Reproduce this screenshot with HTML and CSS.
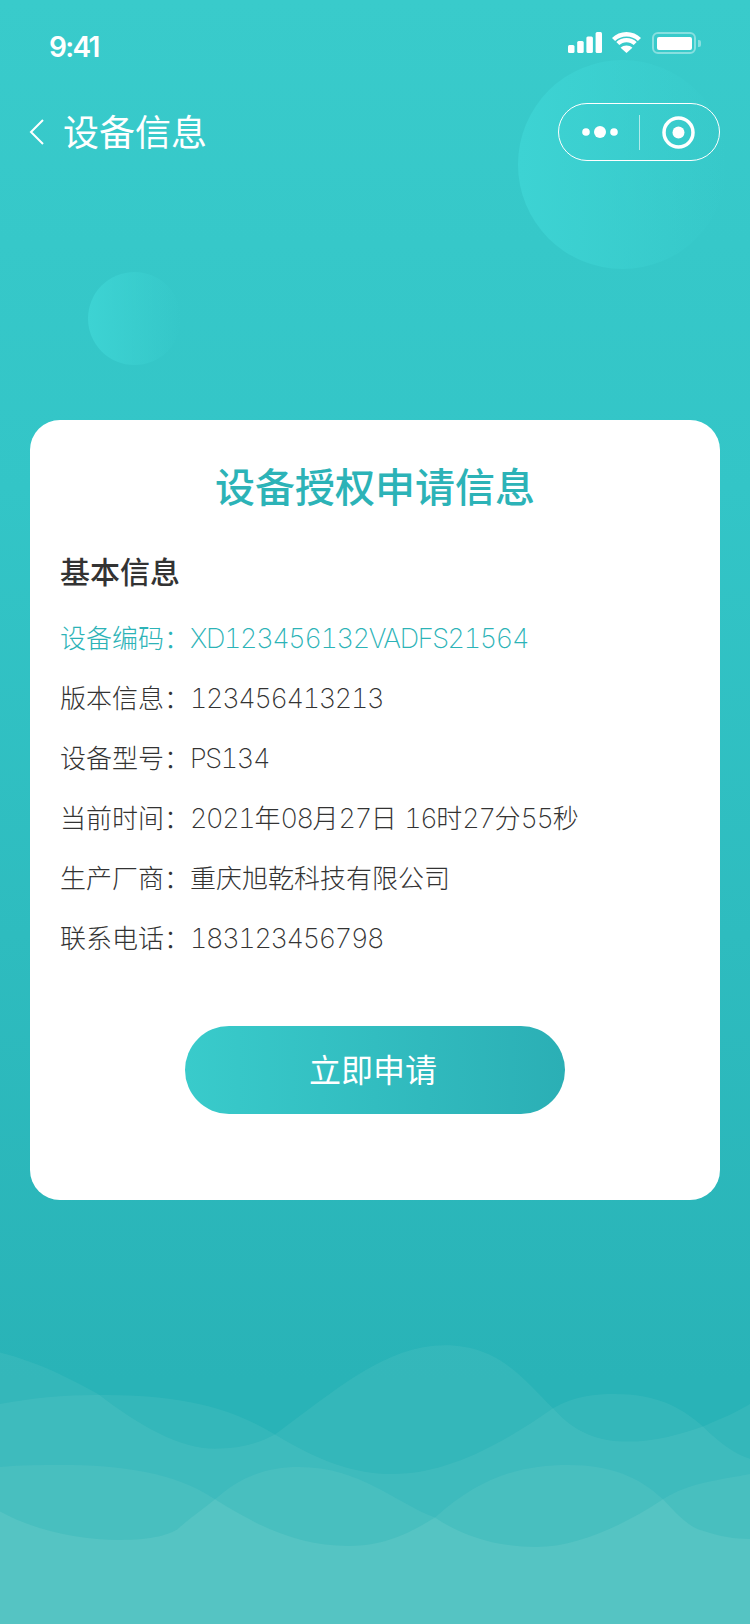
FILE: index.html
```html
<!DOCTYPE html>
<html>
<head>
  <meta charset="UTF-8">
  <title>设备信息</title>
  <link rel="stylesheet" href="styles.css">
</head>
<body>
  <div class="page">
    <div class="bubble bubble-large"></div>
    <div class="bubble bubble-small"></div>

    <svg class="waves" viewBox="0 0 750 300" preserveAspectRatio="none">
      <path class="wave" d="M0 32 C40 42 70 58 98 73 C140 105 180 127 215 127 C240 127 258 122 275 113 C335 70 385 25 445 25 C500 25 525 60 553 87 C575 112 600 120 627 120 C655 120 680 113 703 105 C720 98 735 92 750 83 V300 H0 Z"/>
      <path class="wave" d="M0 83 C30 77 65 74 96 74 C165 74 220 80 275 113 C320 140 355 152 392 152 C450 152 505 120 553 87 C575 75 595 73 615 73 C655 73 680 85 703 105 C720 122 735 132 750 137 V300 H0 Z"/>
      <path class="wave" d="M0 145 C20 143 40 143 62 143 C120 143 175 150 215 177 C240 155 265 145 299 145 C360 145 395 180 435 195 C480 155 520 143 569 143 C610 143 640 155 663 177 C690 160 720 158 750 152 V300 H0 Z"/>
      <path class="wave" d="M0 189 C35 208 80 217 120 217 C150 217 165 213 177 207 C190 195 203 187 215 177 C260 205 300 223 349 223 C385 223 410 210 435 195 C465 215 500 224 536 224 C575 224 620 205 663 177 C680 195 690 205 703 208 C720 214 735 216 750 216 V300 H0 Z"/>
    </svg>

    <div class="status-bar">
      <span class="clock">9:41</span>
      <div class="status-icons">
        <svg class="icon-signal" viewBox="0 0 34 21">
          <rect x="0" y="13" width="6.5" height="8" rx="1.5"/>
          <rect x="9.2" y="9" width="6.5" height="12" rx="1.5"/>
          <rect x="18.4" y="4.5" width="6.5" height="16.5" rx="1.5"/>
          <rect x="27.6" y="0" width="6.4" height="21" rx="1.5"/>
        </svg>
        <svg class="icon-wifi" viewBox="0 0 30 21">
          <path d="M15 4.600 C19.400 4.600 23.400 6.300 26.400 9.100 L29.500 6 C25.700 2.300 20.600 0 15 0 C9.400 0 4.300 2.300 .5 6 L3.600 9.100 C6.600 6.300 10.600 4.600 15 4.600 Z"/>
          <path d="M15 10.300 C17.800 10.300 20.300 11.400 22.200 13.100 L25.200 10 C22.500 7.500 19 6 15 6 C11 6 7.500 7.500 4.800 10 L7.800 13.100 C9.700 11.400 12.200 10.300 15 10.300 Z"/>
          <path d="M15 21 L20.900 15.700 C19.300 14.300 17.300 13.400 15 13.400 C12.700 13.400 10.700 14.300 9.100 15.700 Z"/>
        </svg>
        <div class="battery">
          <div class="battery-body"><div class="battery-level"></div></div>
          <div class="battery-cap"></div>
        </div>
      </div>
    </div>

    <div class="nav-bar">
      <svg class="icon-back" viewBox="0 0 16 26">
        <path d="M14 1 L2 13 L14 25"/>
      </svg>
      <span class="nav-title">设备信息</span>
      <div class="capsule">
        <div class="capsule-cell cell-more">
          <svg class="icon-more" viewBox="0 0 36 12">
            <circle cx="4" cy="6" r="3.800"/>
            <circle cx="18" cy="6" r="6"/>
            <circle cx="32" cy="6" r="3.800"/>
          </svg>
        </div>
        <div class="capsule-line"></div>
        <div class="capsule-cell cell-target">
          <svg class="icon-target" viewBox="0 0 33 33">
            <circle class="target-ring" cx="16.500" cy="16.500" r="14.500"/>
            <circle cx="16.500" cy="16.500" r="6"/>
          </svg>
        </div>
      </div>
    </div>

    <div class="card">
      <h1 class="card-title">设备授权申请信息</h1>
      <h2 class="section-title">基本信息</h2>
      <div class="row row-active">设备编码：<span class="num">XD123456132VADFS21564</span></div>
      <div class="row">版本信息：<span class="num">123456413213</span></div>
      <div class="row">设备型号：<span class="num">PS134</span></div>
      <div class="row">当前时间：<span class="num">2021</span>年<span class="num">08</span>月<span class="num">27</span>日 <span class="num">16</span>时<span class="num">27</span>分<span class="num">55</span>秒</div>
      <div class="row">生产厂商：重庆旭乾科技有限公司</div>
      <div class="row">联系电话：<span class="num">183123456798</span></div>
      <button class="apply-btn">立即申请</button>
    </div>
  </div>
</body>
</html>
```

FILE: styles.css
```css
* {
  box-sizing: border-box;
}
body {
  margin: 0;
  font-family: Inter, "Noto Sans CJK SC", sans-serif;
  overflow: hidden;
}
.page {
  position: relative;
  width: 750px;
  height: 1624px;
  overflow: hidden;
  background: linear-gradient(180deg, #39cbcb 0%, #33c5c7 30%, #29b3b7 85%, #29b3b7 100%);
}

/* decoration behind the content */
.bubble {
  position: absolute;
  border-radius: 50%;
  background: linear-gradient(90deg, #3dd3d3 0%, rgba(61, 211, 211, 0) 100%);
}
.bubble-large {
  left: 518px;
  top: 60px;
  width: 209px;
  height: 209px;
}
.bubble-small {
  left: 88px;
  top: 272px;
  width: 93px;
  height: 93px;
}
.waves {
  position: absolute;
  left: 0;
  bottom: 0;
  width: 750px;
  height: 304px;
}
.wave {
  fill: #f4f9ec;
  fill-opacity: 0.06;
}
.wave:last-child {
  fill-opacity: 0.08;
}

/* status bar */
.status-bar {
  position: relative;
  height: 88px;
  padding: 0 49px 0 49px;
  display: flex;
  justify-content: space-between;
  color: #fff;
}
.clock {
  margin-top: 29px;
  font-size: 28px;
  line-height: 36px;
  font-weight: 600;
  letter-spacing: -1.7px;
}
.status-icons {
  display: flex;
  gap: 10px;
  padding-top: 32px;
}
.status-icons svg {
  display: block;
  fill: #fff;
}
.icon-signal {
  width: 34px;
  height: 21px;
  margin-right: -1px;
}
.icon-wifi {
  width: 31px;
  height: 21px;
}
.battery {
  display: flex;
  align-items: center;
  gap: 2px;
  height: 22px;
}
.battery-body {
  width: 44px;
  height: 22px;
  padding: 2.500px;
  border: 2px solid rgba(255, 255, 255, 0.4);
  border-radius: 6px;
}
.battery-level {
  height: 100%;
  background: #fff;
  border-radius: 2px;
}
.battery-cap {
  width: 3px;
  height: 7px;
  background: rgba(255, 255, 255, 0.4);
  border-radius: 0 2px 2px 0;
}

/* navigation */
.nav-bar {
  position: relative;
  height: 88px;
  padding: 0 30px 0 29px;
  display: flex;
  align-items: center;
  color: #fff;
}
.icon-back {
  width: 16px;
  height: 26px;
  fill: none;
  stroke: #fff;
  stroke-width: 2;
}
.nav-title {
  margin-left: 18px;
  padding-top: 2px;
  font-size: 36px;
  line-height: 44px;
}
.capsule {
  margin-left: auto;
  width: 162px;
  height: 58px;
  display: flex;
  align-items: center;
  border: 1.5px solid #fff;
  border-radius: 29px;
}
.capsule-cell {
  flex: 1;
  display: flex;
  justify-content: center;
}
.cell-more {
  padding-left: 2px;
}
.cell-target {
  padding-right: 2px;
}
.capsule-line {
  width: 1px;
  height: 35px;
  background: rgba(255, 255, 255, 0.6);
}
.icon-more {
  width: 36px;
  height: 12px;
  fill: #fff;
}
.icon-target {
  width: 33px;
  height: 33px;
  fill: #fff;
}
.target-ring {
  fill: none;
  stroke: #fff;
  stroke-width: 3.500;
}

/* card */
.card {
  position: relative;
  width: 690px;
  height: 780px;
  margin: 244px 30px 0;
  padding: 40px 30px 0;
  background: #fff;
  border-radius: 30px;
}
.card-title {
  margin: 0;
  font-size: 40px;
  line-height: 56px;
  font-weight: 500;
  text-align: center;
  color: #2cb3b7;
}
.section-title {
  margin: 35px 0 0;
  font-size: 30px;
  line-height: 42px;
  font-weight: 500;
  color: #333;
}
.row {
  margin-top: 20px;
  font-size: 26px;
  line-height: 40px;
  font-weight: 300;
  color: #333;
}
.num {
  font-size: 27px;
  font-weight: 250;
  font-variant-numeric: tabular-nums;
  letter-spacing: -1.35px;
}
.row-active {
  margin-top: 26px;
  color: #2cb3b7;
}
.apply-btn {
  display: block;
  width: 380px;
  height: 88px;
  margin: 67px auto 0;
  padding: 0 4px 4px 0;
  border: 0;
  border-radius: 44px;
  background: linear-gradient(90deg, #39cbcb 0%, #2bafb5 100%);
  color: #fff;
  font-family: inherit;
  font-size: 32px;
}
```
